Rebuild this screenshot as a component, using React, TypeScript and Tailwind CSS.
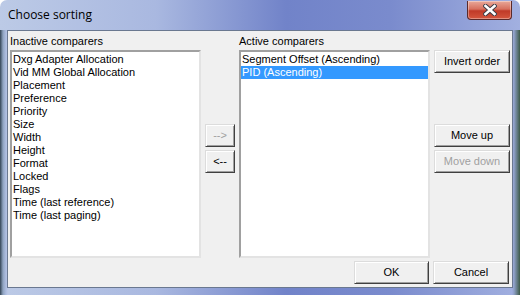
import React from 'react';

const inactive = [
    'Dxg Adapter Allocation',
    'Vid MM Global Allocation',
    'Placement',
    'Preference',
    'Priority',
    'Size',
    'Width',
    'Height',
    'Format',
    'Locked',
    'Flags',
    'Time (last reference)',
    'Time (last paging)',
];

const active = ['Segment Offset (Ascending)', 'PID (Ascending)'];

const ui = { fontFamily: 'Tahoma, "Liberation Sans", Arial, sans-serif' };

const Button: React.FC<{ label: string; disabled?: boolean; className?: string }> = ({ label, disabled, className }) => (
    <div
        className={
            'h-[23px] flex items-center justify-center border border-t-[#dcdcdc] border-l-[#dcdcdc] border-b-[#404040] border-r-[#404040] bg-[#f0f0f0] shadow-[inset_1px_1px_0_#ffffff,inset_-1px_-1px_0_#a0a0a0] text-[11px] ' +
            (disabled ? 'text-[#a0a0a0] ' : 'text-black ') +
            (className || '')
        }
    >
        {label}
    </div>
);

const ListBox: React.FC<{ items: string[]; selected?: number; className?: string }> = ({ items, selected, className }) => (
    <div
        className={
            'bg-white border-2 border-t-[#a0a0a0] border-l-[#a0a0a0] border-b-[#e3e3e3] border-r-[#e3e3e3] pt-[1px] ' +
            (className || '')
        }
    >
        {items.map((it, i) => (
            <div
                key={it}
                className={
                    'h-[13px] leading-[13px] pl-[1px] text-[11px] whitespace-nowrap ' +
                    (i === selected ? 'bg-[#3399ff] text-white' : 'text-black')
                }
            >
                {it}
            </div>
        ))}
    </div>
);

export default function App() {
    return (
        <div className="w-[520px] h-[295px] flex flex-col overflow-hidden rounded-t-[7px] bg-[linear-gradient(90deg,#bccae6_0%,#a9b8e0_30%,#7183c9_55%,#7a8bcd_75%,#a2b0e0_100%)]" style={ui}>
            {/* title bar */}
            <div className="h-[30px] flex items-start justify-between pl-[8px] pr-[8px]">
                <span className="mt-[6px] text-[12px] text-black" style={{ fontFamily: '"Open Sans", "Noto Sans", sans-serif' }}>
                    Choose sorting
                </span>
                <div className="mt-[1px] w-[45px] h-[19px] rounded-b-[4px] border border-[#5a2a2a] border-t-0 bg-[linear-gradient(180deg,#e9a99a_0%,#d7705e_45%,#c03a28_55%,#d4563e_100%)] flex items-center justify-center shadow-[inset_0_0_0_1px_rgba(255,255,255,0.35)]">
                    <svg width="14" height="12" viewBox="0 0 14 12">
                        <path d="M2.5 2 L11.5 10 M11.5 2 L2.5 10" stroke="#3a3a44" strokeWidth="4.4" strokeLinecap="square" />
                        <path d="M2.5 2 L11.5 10 M11.5 2 L2.5 10" stroke="#ffffff" strokeWidth="2.6" strokeLinecap="square" />
                    </svg>
                </div>
            </div>

            {/* frame + client */}
            <div className="flex-1 flex px-[7px] pb-[7px] bg-[linear-gradient(90deg,#334455_0px,#8fa3c0_3px,#aebde0_6px,transparent_8px,transparent_512px,#8fa0c8_514px,#3d5a48_520px)]">
                <div className="flex-1 border border-[#6a7890] bg-[#f0f0f0] flex flex-col pl-[2px] pr-[2px] pt-[1px]">
                    <div className="flex gap-[4px]">
                        <div className="w-[191px] flex flex-col">
                            <div className="h-[18px] pt-[1px] text-[11px] text-black">Inactive comparers</div>
                            <ListBox items={inactive} className="h-[208px]" />
                        </div>
                        <div className="w-[30px] flex flex-col gap-[3px] pt-[92px]">
                            <Button label="-->" disabled />
                            <Button label="<--" />
                        </div>
                        <div className="w-[191px] flex flex-col">
                            <div className="h-[18px] pt-[1px] text-[11px] text-black">Active comparers</div>
                            <ListBox items={active} selected={1} className="h-[208px]" />
                        </div>
                        <div className="w-[76px] flex flex-col pt-[18px]">
                            <Button label="Invert order" />
                            <Button label="Move up" className="mt-[51px]" />
                            <Button label="Move down" disabled className="mt-[3px]" />
                        </div>
                    </div>
                    <div className="flex justify-end gap-[4px] mt-[3px] pr-[1px]">
                        <Button label="OK" className="w-[75px]" />
                        <Button label="Cancel" className="w-[76px]" />
                    </div>
                </div>
            </div>
        </div>
    );
}
